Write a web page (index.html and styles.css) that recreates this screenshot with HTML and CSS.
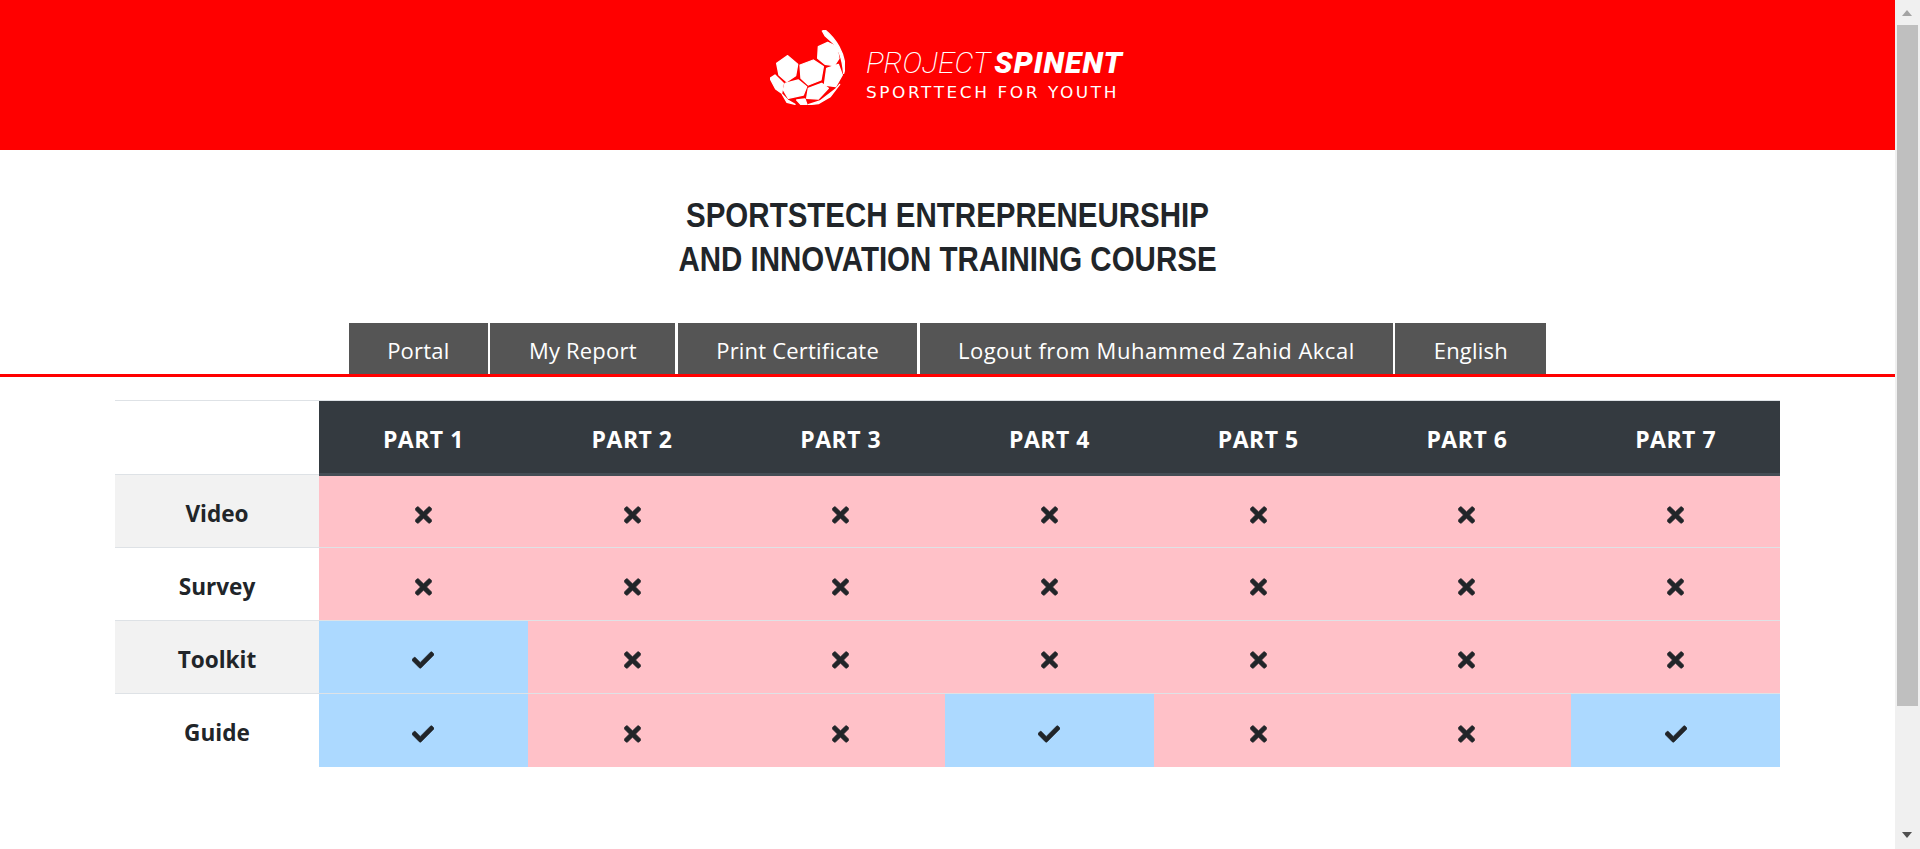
FILE: index.html
```html
<!DOCTYPE html>
<html lang="en">
<head>
<meta charset="utf-8">
<title>Sportstech Entrepreneurship and Innovation Training Course</title>
<link rel="stylesheet" href="styles.css">
</head>
<body>
<svg class="defs" width="0" height="0" aria-hidden="true">
  <symbol id="x" viewBox="0 0 352 512"><path d="M242.72 256l100.07-100.07c12.28-12.28 12.28-32.19 0-44.48l-22.24-22.24c-12.28-12.28-32.19-12.28-44.48 0L176 189.28 75.93 89.21c-12.28-12.28-32.19-12.28-44.48 0L9.21 111.45c-12.28 12.28-12.28 32.19 0 44.48L109.28 256 9.21 356.07c-12.28 12.28-12.28 32.19 0 44.48l22.24 22.24c12.28 12.28 32.2 12.28 44.48 0L176 322.72l100.07 100.07c12.28 12.28 32.2 12.28 44.48 0l22.24-22.24c12.28-12.28 12.28-32.19 0-44.48L242.72 256z"/></symbol>
  <symbol id="c" viewBox="0 0 512 512"><path d="M173.898 439.404l-166.4-166.4c-9.997-9.997-9.997-26.206 0-36.204l36.203-36.204c9.997-9.998 26.207-9.998 36.204 0L192 312.69 432.095 72.596c9.997-9.997 26.207-9.997 36.204 0l36.203 36.204c9.997 9.997 9.997 26.206 0 36.204l-294.4 294.401c-9.998 9.997-26.207 9.997-36.204-.001z"/></symbol>
</svg>
<div class="shell">
<main class="page">
  <header class="brand">
    <div class="logo">
      <svg class="ball" viewBox="15 15 225 225" aria-hidden="true">
        <g class="ball-faces">
          <path d="M172 18 L180 15 C212 40 240 85 240 130 L236 145 C232 100 222 68 200 50 L180 32 Z"/>
          <polygon points="160,65 188,52 215,65 222,100 208,122 180,118 158,100"/>
          <polygon points="35,115 68,92 98,118 92,152 65,170 42,150"/>
          <polygon points="105,120 145,105 175,125 168,165 130,180 108,160"/>
          <polygon points="185,130 220,118 232,150 212,185 178,180"/>
          <polygon points="60,175 100,165 125,185 115,210 70,220 55,195"/>
          <polygon points="130,190 170,175 190,190 160,222 125,220"/>
          <polygon points="15,160 30,150 55,175 50,205 32,192"/>
          <polygon points="52,208 68,225 90,238 66,232"/>
          <polygon points="95,225 120,222 126,239 108,239"/>
          <polygon points="130,239 165,228 212,192 224,178 196,215 160,236"/>
        </g>
      </svg>
      <div class="wordmark">
        <div class="project"><span class="thin">PROJECT</span><span class="bold">SPINENT</span></div>
        <div class="tagline">SPORTTECH FOR YOUTH</div>
      </div>
    </div>
  </header>

  <h1 class="title">SPORTSTECH ENTREPRENEURSHIP<br>AND INNOVATION TRAINING COURSE</h1>

  <nav class="tabs">
    <a class="tab">Portal</a>
    <a class="tab">My Report</a>
    <a class="tab">Print Certificate</a>
    <a class="tab tab-long">Logout from Muhammed Zahid Akcal</a>
    <a class="tab">English</a>
  </nav>

  <section class="wrap">
    <table class="progress">
      <thead>
        <tr>
          <th class="blank"></th>
          <th>PART 1</th><th>PART 2</th><th>PART 3</th><th>PART 4</th><th>PART 5</th><th>PART 6</th><th>PART 7</th>
        </tr>
      </thead>
      <tbody>
        <tr class="odd">
          <th>Video</th>
          <td class="no"><svg class="ix"><use href="#x"/></svg></td>
          <td class="no"><svg class="ix"><use href="#x"/></svg></td>
          <td class="no"><svg class="ix"><use href="#x"/></svg></td>
          <td class="no"><svg class="ix"><use href="#x"/></svg></td>
          <td class="no"><svg class="ix"><use href="#x"/></svg></td>
          <td class="no"><svg class="ix"><use href="#x"/></svg></td>
          <td class="no"><svg class="ix"><use href="#x"/></svg></td>
        </tr>
        <tr>
          <th>Survey</th>
          <td class="no"><svg class="ix"><use href="#x"/></svg></td>
          <td class="no"><svg class="ix"><use href="#x"/></svg></td>
          <td class="no"><svg class="ix"><use href="#x"/></svg></td>
          <td class="no"><svg class="ix"><use href="#x"/></svg></td>
          <td class="no"><svg class="ix"><use href="#x"/></svg></td>
          <td class="no"><svg class="ix"><use href="#x"/></svg></td>
          <td class="no"><svg class="ix"><use href="#x"/></svg></td>
        </tr>
        <tr class="odd">
          <th>Toolkit</th>
          <td class="yes"><svg class="ic"><use href="#c"/></svg></td>
          <td class="no"><svg class="ix"><use href="#x"/></svg></td>
          <td class="no"><svg class="ix"><use href="#x"/></svg></td>
          <td class="no"><svg class="ix"><use href="#x"/></svg></td>
          <td class="no"><svg class="ix"><use href="#x"/></svg></td>
          <td class="no"><svg class="ix"><use href="#x"/></svg></td>
          <td class="no"><svg class="ix"><use href="#x"/></svg></td>
        </tr>
        <tr>
          <th>Guide</th>
          <td class="yes"><svg class="ic"><use href="#c"/></svg></td>
          <td class="no"><svg class="ix"><use href="#x"/></svg></td>
          <td class="no"><svg class="ix"><use href="#x"/></svg></td>
          <td class="yes"><svg class="ic"><use href="#c"/></svg></td>
          <td class="no"><svg class="ix"><use href="#x"/></svg></td>
          <td class="no"><svg class="ix"><use href="#x"/></svg></td>
          <td class="yes"><svg class="ic"><use href="#c"/></svg></td>
        </tr>
      </tbody>
    </table>
  </section>
</main>
<aside class="scrollbar" aria-hidden="true">
  <span class="arrow up"></span>
  <div class="track"><div class="thumb"></div></div>
  <span class="arrow down"></span>
</aside>
</div>
</body>
</html>
```
FILE: styles.css
```css
* { box-sizing: border-box; }
html, body { margin: 0; padding: 0; height: 100%; overflow: hidden; background: #fff; }
body { font-family: "Open Sans", "Noto Sans", sans-serif; color: #212529; }
.defs { position: absolute; }
.shell { display: flex; height: 100%; }
.page { flex: 1 1 auto; min-width: 0; }

.brand { height: 150px; background: #f00; display: flex; justify-content: center; align-items: flex-start; padding-top: 30px; }
.logo { display: flex; margin-left: -2px; }
.ball { width: 75px; height: 75px; display: block; }
.ball-faces { fill: #fff; stroke: #fff; stroke-width: 4px; stroke-linejoin: round; }
.wordmark { margin-left: 21px; color: #fff; padding-top: 17px; }
.project { font-style: italic; font-size: 30px; line-height: 30px; white-space: nowrap; }
.thin { font-family: Roboto, sans-serif; font-weight: 200; }
.bold { font-family: Roboto, sans-serif; font-weight: 900; margin-left: 4px; letter-spacing: 1.1px; }
.tagline { font-family: "DejaVu Sans", sans-serif; font-size: 15px; line-height: 16px; margin-top: 7px; letter-spacing: 2.3px; white-space: nowrap; transform: scaleX(1.126); transform-origin: left center; }

.title { margin: 43px 0 0; text-align: center; font-family: "Liberation Sans", sans-serif; font-weight: 700; font-size: 35px; line-height: 44px; transform: scaleX(.843); }

.tabs { margin-top: 42px; height: 54px; display: flex; justify-content: center; gap: 2.5px; border-bottom: 3px solid #f00; }
.tab { height: 51px; padding: 11px 38.5px 0; background: #555; color: #fff; font-size: 22px; line-height: 32px; letter-spacing: .2px; white-space: nowrap; }
.tab-long { letter-spacing: .5px; padding: 11px 38px 0; }

.wrap { padding: 23px 115px 0; }
.progress { width: 100%; border-collapse: collapse; table-layout: fixed; font-size: 22.6px; }
.progress th.blank { background: #fff; color: inherit; }
.progress thead th { height: 74px; background: #343a40; color: #fff; font-size: 23px; font-weight: 700; text-align: center; vertical-align: middle; border-top: 1px solid #dee2e6; border-bottom: 3px solid #454d55; padding: 3px 0 0; letter-spacing: .5px; }
.progress thead th.blank { width: 204px; border-bottom: 0; }
.progress tbody th { font-weight: 700; text-align: center; padding: 5px 0 0; border-top: 1px solid #dee2e6; background: #fff; }
.progress tbody tr.odd th { background: #f2f2f2; }
.progress tbody tr { height: 73px; }
.progress td { text-align: center; vertical-align: middle; padding: 2px 0 0; border-top: 1px solid #dee2e6; }
.no { background: #ffc1c8; }
.yes { background: #acd9ff; }
.ix, .ic { display: inline-block; vertical-align: middle; fill: #212529; stroke: #212529; stroke-width: 14px; }
.ix { width: 17px; height: 24px; }
.ic { width: 22px; height: 22px; }

.scrollbar { flex: 0 0 25px; background: #f0f0f0; display: flex; flex-direction: column; align-items: center; }
.track { flex: 1 1 auto; width: 100%; padding: 0 2px; }
.thumb { height: 681px; background: #bfbfbf; }
.arrow { flex: 0 0 25px; width: 100%; position: relative; }
.arrow::after { content: ""; position: absolute; left: 7px; border-left: 5.5px solid transparent; border-right: 5.5px solid transparent; }
.up::after { top: 10px; border-bottom: 6px solid #a3a3a3; }
.down::after { top: 8px; border-top: 6px solid #505050; }
```
